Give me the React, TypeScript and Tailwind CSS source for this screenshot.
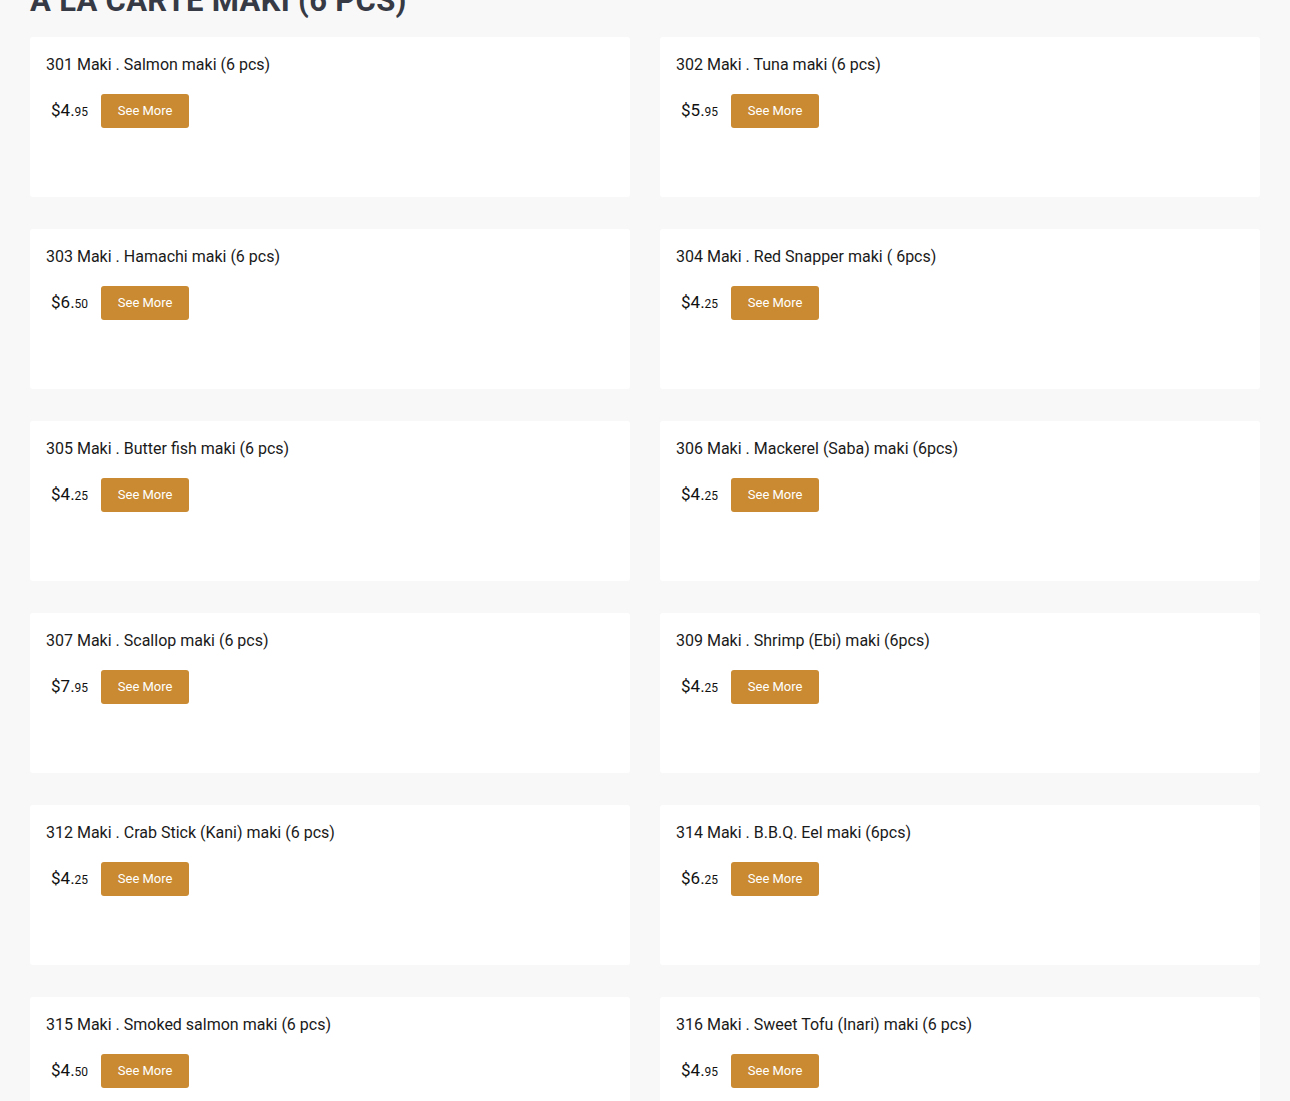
const ITEMS: [string, string, string][] = [
  ['301 Maki . Salmon maki (6 pcs)', '4', '95'],
  ['302 Maki . Tuna maki (6 pcs)', '5', '95'],
  ['303 Maki . Hamachi maki (6 pcs)', '6', '50'],
  ['304 Maki . Red Snapper maki ( 6pcs)', '4', '25'],
  ['305 Maki . Butter fish maki (6 pcs)', '4', '25'],
  ['306 Maki . Mackerel (Saba) maki (6pcs)', '4', '25'],
  ['307 Maki . Scallop maki (6 pcs)', '7', '95'],
  ['309 Maki . Shrimp (Ebi) maki (6pcs)', '4', '25'],
  ['312 Maki . Crab Stick (Kani) maki (6 pcs)', '4', '25'],
  ['314 Maki . B.B.Q. Eel maki (6pcs)', '6', '25'],
  ['315 Maki . Smoked salmon maki (6 pcs)', '4', '50'],
  ['316 Maki . Sweet Tofu (Inari) maki (6 pcs)', '4', '95'],
]

export default function App() {
  return (
    <main className="min-h-screen bg-[#f8f8f8] px-[30px] overflow-hidden" style={{ fontFamily: 'Roboto, "Liberation Sans", sans-serif' }}>
      <h2 className="-mt-[15px] text-[31px] leading-[31px] font-bold text-[#363a45] tracking-[0.3px]">
        A LA CARTE MAKI (6 PCS)
      </h2>

      <div className="mt-[21px] grid grid-cols-2 gap-x-[30px] gap-y-[32px]">
        {ITEMS.map(([name, dollars, cents]) => (
          <div key={name} className="h-[160px] bg-white rounded-[3px] px-4 pt-[16px]">
            <div className="text-[16px] leading-[24px] text-[#1a1a1a]">{name}</div>
            <div className="mt-[17px] flex items-center">
              <span className="ml-[5px] text-[#111]">
                <span className="text-[17px]">${dollars}.</span>
                <span className="text-[12px]">{cents}</span>
              </span>
              <button className="ml-[13px] w-[88px] h-[34px] rounded-[3px] bg-[#c98a31] text-white text-[13px]">
                See More
              </button>
            </div>
          </div>
        ))}
      </div>
    </main>
  )
}
